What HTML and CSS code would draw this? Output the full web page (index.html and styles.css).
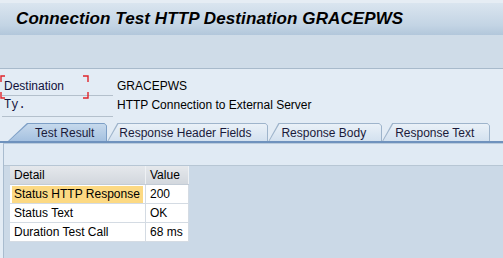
FILE: index.html
```html
<!DOCTYPE html>
<html lang="en">
<head>
  <meta charset="UTF-8" />
  <title>Connection Test HTTP Destination GRACEPWS</title>
  <link rel="stylesheet" href="styles.css">
</head>
<body>

<div class="title-bar">
  <h1>Connection Test HTTP Destination GRACEPWS</h1>
</div>
<div class="toolbar"></div>

<div class="head-area">
  <div class="field-row">
    <div class="field-label required">
      Destination
      <svg class="req-marks" width="89" height="24" viewBox="0 0 89 24">
        <path d="M1 7 V1 H5 M83 1 H88 V7 M1 17 V23 H5 M83 23 H88 V17" fill="none" stroke="#e0242b" stroke-width="1.4"/>
      </svg>
    </div>
    <div class="field-value">GRACEPWS</div>
  </div>
  <div class="field-row">
    <div class="field-label mono">Ty.</div>
    <div class="field-value">HTTP Connection to External Server</div>
  </div>

  <div class="tabs">
    <div class="tab active"><div class="tab-face">Test Result</div></div>
    <div class="tab"><div class="tab-face">Response Header Fields</div></div>
    <div class="tab"><div class="tab-face">Response Body</div></div>
    <div class="tab"><div class="tab-face">Response Text</div></div>
  </div>
</div>

<div class="panel">
  <div class="panel-top"></div>
  <div class="grid-area">
    <table class="result-table">
      <thead>
        <tr>
          <th class="col-detail">Detail</th>
          <th class="col-value">Value</th>
        </tr>
      </thead>
      <tbody>
        <tr>
          <td><span class="focus">Status HTTP Response</span></td>
          <td>200</td>
        </tr>
        <tr>
          <td>Status Text</td>
          <td>OK</td>
        </tr>
        <tr>
          <td>Duration Test Call</td>
          <td>68 ms</td>
        </tr>
      </tbody>
    </table>
  </div>
</div>

</body>
</html>
```

FILE: styles.css
```css
body {
  margin: 0;
  padding: 0;
  width: 503px;
  height: 258px;
  overflow: hidden;
  font-family: 'Liberation Sans', Arial, sans-serif;
  font-size: 12px;
  background-color: #e3ecf5;
  color: #000;
}

.title-bar {
  height: 32px;
  border-top: 3px solid #e6edf4;
  background: linear-gradient(to bottom, #dae5ef, #c3d4e4 70%, #b2c7db);
  display: flex;
  align-items: center;
  padding-left: 16px;
}

.title-bar h1 {
  margin: 0;
  font-size: 17px;
  font-weight: bold;
  font-style: italic;
  color: #000;
  letter-spacing: 0.1px;
}

.toolbar {
  height: 33px;
  background-color: #cfdce8;
  border-bottom: 1px solid #a8bacb;
}

.head-area {
  background-color: #e3ecf5;
  padding-top: 6px;
}

.field-row {
  display: flex;
  height: 21px;
}

.field-label {
  position: relative;
  width: 111px;
  margin-left: 2px;
  padding-left: 2px;
  box-sizing: border-box;
  border-bottom: 1px solid #b4c0cc;
  color: #10103a;
  line-height: 22px;
  margin-right: 4px;
}

.field-row + .field-row .field-label {
  line-height: 19px;
}

.field-label.mono {
  font-family: 'Liberation Mono', 'Courier New', monospace;
}

.req-marks {
  position: absolute;
  left: -2px;
  top: 0;
}

.field-value {
  line-height: 22px;
  color: #000;
}

.field-row + .field-row .field-value {
  line-height: 19px;
}

.tabs {
  display: flex;
  margin-top: 6px;
  padding-left: 8px;
  height: 18px;
  border-bottom: 2px solid #6f92bd;
}

.tab {
  height: 18px;
  background-color: #9eb4cb;
  clip-path: polygon(0 100%, 10px 0, calc(100% - 3px) 0, 100% 3px, 100% 100%);
}

.tab-face {
  height: 17px;
  margin: 1px 1px 0 1px;
  padding: 0 16px 0 12px;
  background: linear-gradient(to bottom, #eaf1f8, #d3e1ef);
  clip-path: polygon(0 100%, 10px 0, calc(100% - 2px) 0, 100% 2px, 100% 100%);
  color: #1a1a3a;
  line-height: 18px;
  white-space: nowrap;
}

.tab:nth-child(2) .tab-face {
  padding-left: 11px;
  padding-right: 16px;
}

.tab:nth-child(3) .tab-face,
.tab:nth-child(4) .tab-face {
  padding-left: 12px;
  padding-right: 15px;
}

.tab.active {
  background-color: #7d9fc6;
  clip-path: polygon(0 100%, 19px 0, calc(100% - 3px) 0, 100% 3px, 100% 100%);
}

.tab.active .tab-face {
  padding-left: 26px;
  padding-right: 12px;
  background: linear-gradient(to bottom, #c6d9ec, #a5c1e0);
  clip-path: polygon(0 100%, 19px 0, calc(100% - 2px) 0, 100% 2px, 100% 100%);
}

.panel {
  margin-left: 3px;
  border-left: 1px solid #a9bccf;
  border-top: 1px solid #b9cbdd;
  height: 120px;
}

.panel-top {
  height: 21px;
  background-color: #e0eaf4;
  border-bottom: 1px solid #b7c6d4;
}

.grid-area {
  height: 100px;
  background-color: #cbd9e7;
  padding-left: 6px;
}

.result-table {
  border-collapse: collapse;
  background-color: #fff;
  color: #000;
}

.result-table th {
  height: 18px;
  padding: 0 4px;
  text-align: left;
  font-weight: normal;
  background: linear-gradient(to bottom, #e5e8ec, #d2d7dd);
  border-right: 1px solid #eef1f4;
  border-bottom: 1px solid #c3ccd6;
}

.col-detail {
  width: 127px;
}

.col-value {
  width: 34px;
}

.result-table td {
  height: 18px;
  padding: 0 4px;
  border-right: 1px solid #d4dbe3;
  border-bottom: 1px solid #d4dbe3;
  white-space: nowrap;
}

.focus {
  display: block;
  margin: 0 -2px;
  padding: 0 2px;
  line-height: 17px;
  background-color: #fcd983;
}
```
